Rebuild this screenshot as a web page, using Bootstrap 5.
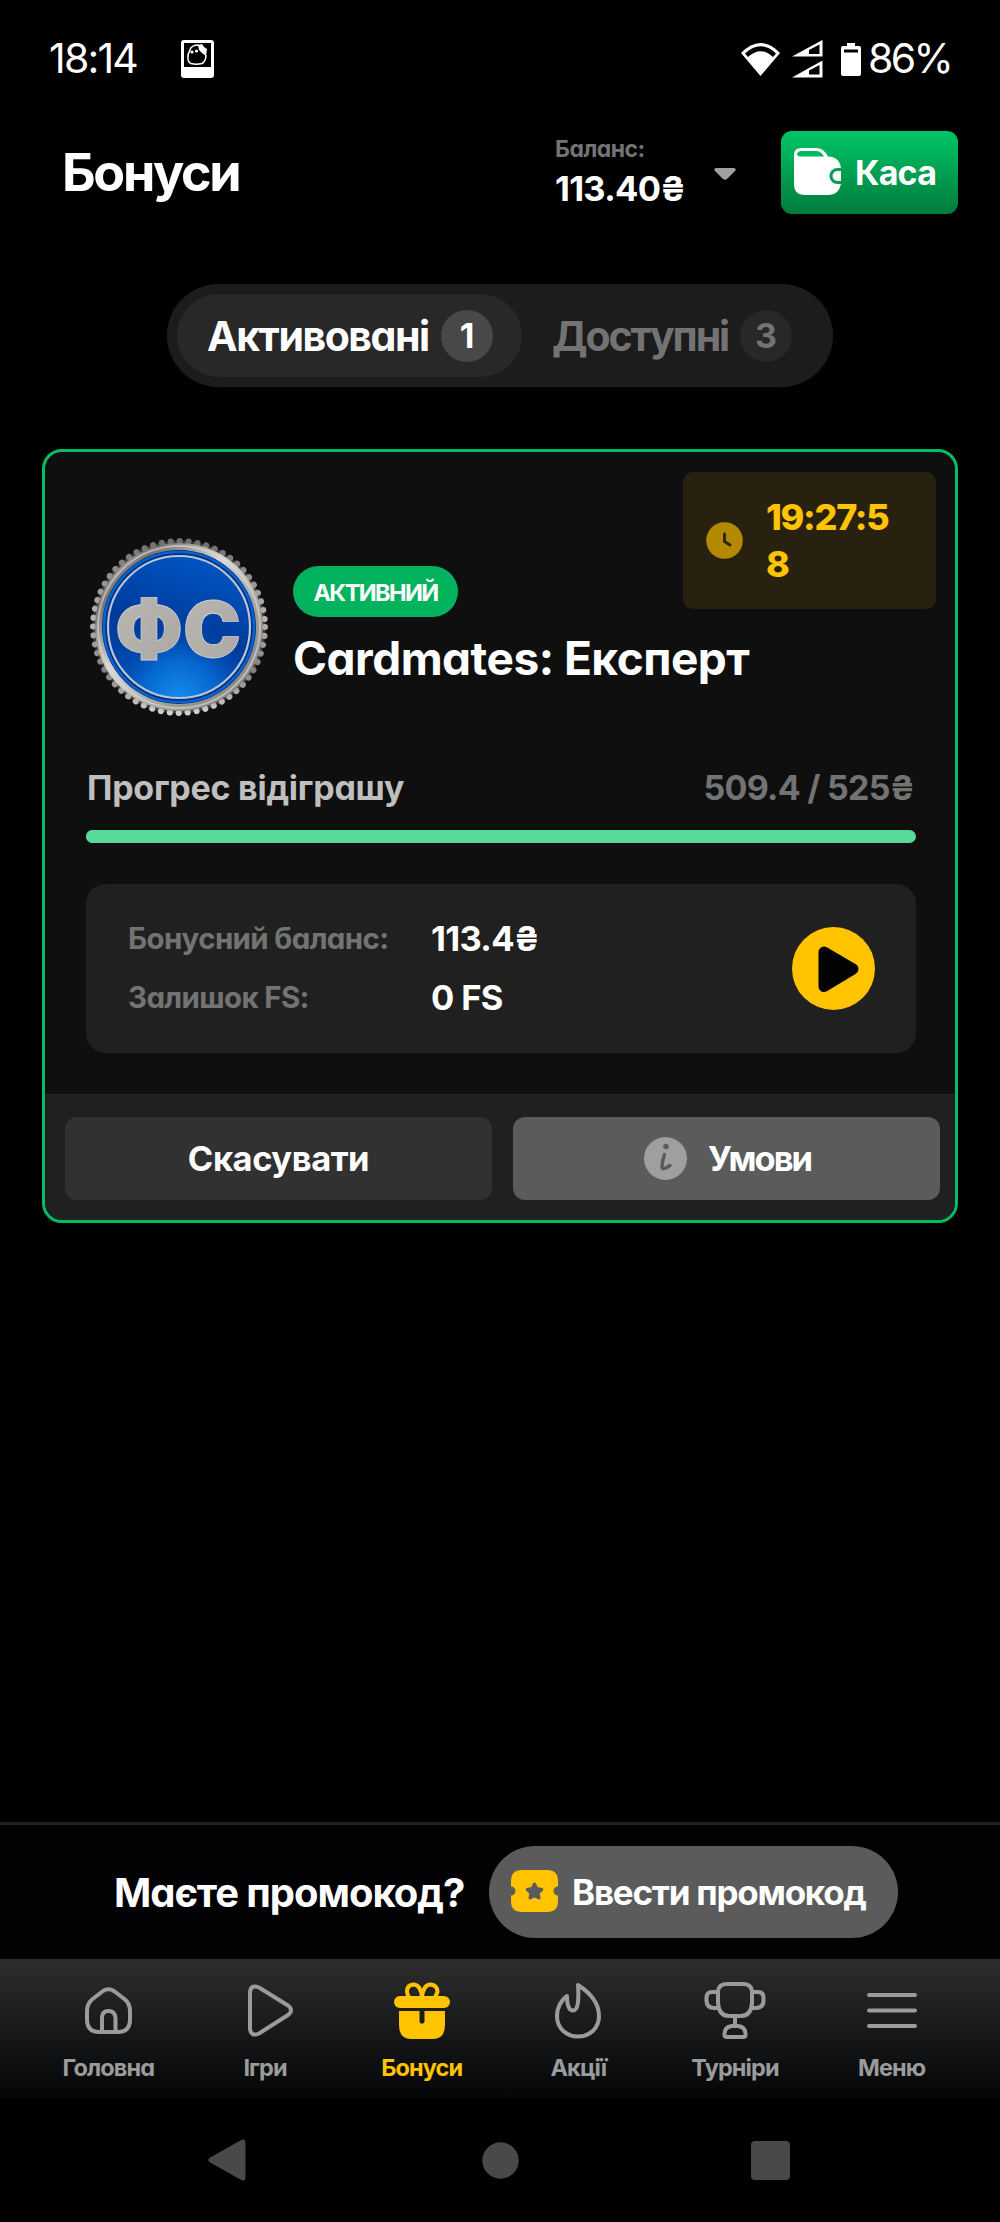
<!DOCTYPE html>
<html lang="uk">
<head>
<meta charset="utf-8">
<meta name="viewport" content="width=device-width, initial-scale=1">
<title>Бонуси</title>
<link href="https://cdn.jsdelivr.net/npm/bootstrap@5.3.0/dist/css/bootstrap.min.css" rel="stylesheet">
<style>
body{background:#000;color:#fff;font-family:Inter,"Noto Sans",sans-serif;font-feature-settings:"cv11";font-weight:680}
.screen{width:1000px;height:2222px;overflow:hidden}
.t{white-space:nowrap;display:inline-block}
svg{display:block;flex:none}
.statusbar{height:118px;padding:0 49px;font-size:41px;font-weight:400}
.status-time{letter-spacing:-1.8px}
.status-charge{letter-spacing:-2.7px}
.sim{margin-left:44px}
.signal{margin-left:12px}
.battery{margin:0 7px 0 18px}
.topbar{height:109px;padding:0 42px 0 62px}
.page-title{font-size:52px;font-weight:700;line-height:60px;letter-spacing:-2.3px}
.balance{width:159px}
.bal-label{font-size:23px;line-height:32px;color:#737373;letter-spacing:-.5px}
.bal-value{font-size:34.5px;line-height:47px;letter-spacing:-.7px}
.caret{margin:3px 45px 0 0}
.btn-cash{width:177px;height:83px;border-radius:11px;background:linear-gradient(#00c565,#007b3c);font-size:34px;color:#fff;font-weight:680;letter-spacing:-.8px}
.btn-cash svg{margin:-2px 14px 0 13px}
.tabs-wrap{width:666px;height:103px;background:#1c1c1c;padding:10px;margin:57px auto 0;font-size:41px}
.tab-on{width:345px;background:#282828;padding-left:30px}
.tab-off{color:#737373;padding-left:30px}
.tab-on .t{letter-spacing:-1.45px;width:222px;margin-top:2px}
.tab-off .t{letter-spacing:-2.1px;width:176px;margin-top:2px}
.count{width:52px;height:52px;font-size:34px;background:#484848;margin-left:12px}
.tab-off .count{background:#282828}
.bonus{width:916px;height:774px;margin:62px auto 0;border:3px solid #00be61;border-radius:20px;background:#0f0f0f}
.bonus-head{margin:86px 0 0 45px;height:178px}
.bonus-info{padding:28px 0 0 25px}
.state{width:165px;height:51px;background:#03b25c;font-size:23.5px;font-weight:700;letter-spacing:-1.6px;padding-top:2px}
.bonus-title{font-size:46px;line-height:55px;margin-top:14px;letter-spacing:-.5px}
.timer{top:20px;right:19px;width:253px;height:137px;border-radius:10px;background:#282110;color:#ffc300;font-size:36px;font-weight:800;line-height:47px;padding-left:23px;letter-spacing:-1.3px}
.timer-text{margin-left:23px}
.prog-row{margin:46px 41px 0 42px;height:50px;font-size:34px;color:#bfbfbf;letter-spacing:-.25px}
.prog-row .sum{color:#737373;letter-spacing:-.75px}
.progress{margin:18px 39px 0 41px;height:13px;border-radius:7px;background:#57d99a}
.progress-bar{background:#57d99a}
.details{margin:41px 39px 0 41px;height:169px;border-radius:20px;background:#202020;padding:0 41px 0 42px}
.detail-row{height:59px}
.detail-label{width:303px;font-size:29.5px;color:#737373;letter-spacing:-.65px;margin-top:-1px}
.detail-value{font-size:34.5px;letter-spacing:-.65px}
.bonus-foot{margin-top:41px;height:126px;background:#202020;border-radius:0 0 17px 17px;padding:3px 15px 0 20px}
.act{height:83px;width:427px;border-radius:12px;background:#313131;color:#fff;font-size:34.5px;font-weight:680;letter-spacing:-.45px}
.act.info{background:#5b5b5b;letter-spacing:-2px}
.act.info svg{margin:0 21px 0 2px}
.promo{height:137px;border-top:3px solid #202122;background:#020204;padding-left:114px;font-size:40px}
.promo-q{width:375px;letter-spacing:-1.05px;padding-top:2px}
.promo-btn{width:409px;height:92px;background:#5b5b5b;font-size:35px;font-weight:680;color:#fff;padding-left:22px;letter-spacing:-1.25px}
.promo-btn svg{margin:-3px 14px 0 0}
.tabbar{height:139px;background:linear-gradient(#2d2d2d,#111213 68%,#040507);padding:0 30px;font-size:23.5px;color:#9b9b9b;letter-spacing:-.9px}
.tabbar .item{flex:1 1 0;padding-top:18px}
.tabbar .item.on{color:#ffc300}
.tabbar .name{line-height:32px;margin-top:9px}
.tabbar svg{fill:none;stroke:currentColor;stroke-width:4;stroke-linejoin:round;stroke-linecap:round}
.sysbar{height:124px;padding:0 210px 0 208px}
.sys-home{margin-left:3px}
</style>
</head>
<body>
<div class="screen d-flex flex-column">
  <div class="statusbar d-flex align-items-center">
    <span class="t status-time">18:14</span>
    <svg class="sim" width="33" height="38" viewBox="0 0 33 38"><rect width="33" height="38" rx="3" fill="#fff"/><rect x="3" y="3" width="27" height="24" fill="#000"/><path d="M9 10C6 15 6 22 10 23.500Q15 25 21 23.500Q25 21 25 15M9 10Q10 5 18 5" fill="none" stroke="#fff" stroke-width="1.500"/><path d="M17 5l4-1 2 3 3 2-1 7-4-3-3-3z" fill="#fff"/><circle cx="11" cy="12" r="1.600" fill="#fff"/><circle cx="15.500" cy="11" r="1.600" fill="#fff"/></svg>
    <svg class="ms-auto" width="39" height="33" viewBox="0 0 39 33"><path d="M0 10Q19.500-10 39 10L19.500 33z" fill="#fff"/><path d="M4 10.500Q19.500-4 35 10.500L32 14Q19.500 2.500 7 14z" fill="#000"/></svg>
    <svg class="signal" width="31" height="38" viewBox="0 0 31 38"><path d="M0 16.500L30.500 0v16.500zM0 37.500L30.500 20.500v17z" fill="#fff"/><path d="M17 10L27.500 4.500V14H17zM17 30.500L27.500 25v9.500H17z" fill="#000"/></svg>
    <svg class="battery" width="20" height="33" viewBox="0 0 20 33"><path d="M6 0h8v3h4q2 0 2 2v26q0 2-2 2H2q-2 0-2-2V5q0-2 2-2h4z" fill="#fff"/><path d="M3 6.500h14v3H3z" fill="#000"/></svg>
    <span class="t status-charge">86%</span>
  </div>
  <header class="topbar d-flex align-items-center">
    <span class="page-title t">Бонуси</span>
    <div class="ms-auto d-flex align-items-center">
      <div class="balance d-flex flex-column align-items-start"><span class="bal-label t">Баланс:</span><span class="bal-value t">113.40₴</span></div>
      <svg class="caret" width="22" height="12" viewBox="0 0 22 12"><path d="M2 0h18q3 1 1 3l-8 8q-2 1.500-4 0L1 3Q-1 1 2 0z" fill="#a0a0a0"/></svg>
      <button class="btn-cash border-0 p-0 d-flex align-items-center">
        <svg width="47" height="47" viewBox="0 0 47 47"><path d="M0 7Q0 0 7 0H22Q30 0 34 8.500Q47 9 47 22.500V36Q44.500 47 35 47H11Q0 47 0 36z" fill="#fff"/><path d="M7 3H22Q27 3 30 8.500H6Q3 8 3 5.500Q4 3 7 3z" fill="#00b85d"/><path d="M47 20H43.500a8 8 0 0 0 0 16H47z" fill="#009f4f"/><path d="M47 23h-3.500a5 5 0 0 0 0 10H47z" fill="#fff"/></svg>
        <span class="t">Каса</span></button>
    </div>
  </header>
  <div class="tabs-wrap rounded-pill d-flex flex-shrink-0">
    <div class="tab-on rounded-pill d-flex align-items-center"><span class="t">Активовані</span><span class="count rounded-circle d-flex align-items-center justify-content-center">1</span></div>
    <div class="tab-off d-flex align-items-center"><span class="t">Доступні</span><span class="count rounded-circle d-flex align-items-center justify-content-center">3</span></div>
  </div>
  <section class="bonus position-relative flex-shrink-0 d-flex flex-column">
    <div class="timer position-absolute d-flex align-items-center">
      <svg width="37" height="37" viewBox="0 0 37 37"><circle cx="18.500" cy="18.500" r="18.300" fill="#b38900"/><path d="M18.500 12v7.500l5.500 3.500" fill="none" stroke="#282110" stroke-width="2.800" stroke-linecap="round" stroke-linejoin="round"/></svg>
      <div class="timer-text">19:27:5<br>8</div>
    </div>
    <div class="bonus-head d-flex">
      <svg width="178" height="178" viewBox="-89 -89 178 178">
        <defs>
          <linearGradient id="rim" x1="0" y1="0" x2="1" y2="1"><stop offset="0" stop-color="#d6d4d0"/><stop offset=".2" stop-color="#77736f"/><stop offset=".42" stop-color="#dad8d5"/><stop offset=".7" stop-color="#a19d99"/><stop offset=".85" stop-color="#8a8784"/><stop offset="1" stop-color="#bbb"/></linearGradient>
          <linearGradient id="bead" x1="0" y1="0" x2="0" y2="1"><stop offset="0" stop-color="#716e6b"/><stop offset=".45" stop-color="#b9b6b3"/><stop offset=".75" stop-color="#817e7b"/><stop offset="1" stop-color="#d2d0cd"/></linearGradient>
          <radialGradient id="glow" cx=".5" cy="1" r=".6"><stop offset="0" stop-color="#158cec"/><stop offset=".45" stop-color="#0566cf"/><stop offset="1" stop-color="#003c9e" stop-opacity="0"/></radialGradient>
          <linearGradient id="blue" x1=".7" y1="0" x2=".4" y2="1"><stop offset="0" stop-color="#0056c4"/><stop offset=".55" stop-color="#003a9b"/><stop offset="1" stop-color="#0048ae"/></linearGradient>
          <linearGradient id="metal" x1="0" y1="0" x2="1" y2="1"><stop offset="0" stop-color="#bbb8b4"/><stop offset="1" stop-color="#aaa7a3"/></linearGradient>
        </defs>
        <circle r="86.500" fill="#3f3d3b"/>
        <circle r="86" fill="none" stroke="url(#bead)" stroke-width="6" stroke-dasharray="0.100 8.905" stroke-linecap="round"/>
        <circle r="84" fill="url(#rim)"/>
        <circle r="81" fill="none" stroke="#dedcd9" stroke-width="2" opacity=".6"/>
        <circle r="77" fill="#02307f"/><circle r="75" fill="none" stroke="#0763d0" stroke-width="2.500"/>
        <circle r="71" fill="url(#blue)"/>
        <circle r="71" fill="url(#glow)" stroke="#b9c4d4" stroke-width="2.200"/>
        <g font-family="Inter,sans-serif" font-weight="900" fill="url(#metal)" stroke="#d2cfcb" stroke-width=".8"><text x="-64" y="29.500" font-size="77" textLength="68" lengthAdjust="spacingAndGlyphs">Ф</text><text x="4" y="29.500" font-size="77" textLength="58" lengthAdjust="spacingAndGlyphs">С</text></g>
      </svg>
      <div class="bonus-info">
        <div class="state rounded-pill d-flex align-items-center justify-content-center">АКТИВНИЙ</div>
        <div class="bonus-title"><span class="t">Cardmates: Експерт</span></div>
      </div>
    </div>
    <div class="prog-row d-flex align-items-center justify-content-between"><span class="t">Прогрес відіграшу</span><span class="t sum">509.4 / 525₴</span></div>
    <div class="progress"><div class="progress-bar" style="width:97%"></div></div>
    <div class="details d-flex align-items-center justify-content-between">
      <div>
        <div class="detail-row d-flex align-items-center"><div class="detail-label">Бонусний баланс:</div><span class="detail-value t">113.4₴</span></div>
        <div class="detail-row d-flex align-items-center"><div class="detail-label">Залишок FS:</div><span class="detail-value t">0 FS</span></div>
      </div>
      <svg width="83" height="83" viewBox="0 0 83 83"><circle cx="41.500" cy="41.500" r="41.500" fill="#ffc300"/><path d="M32 25v34.500L61 42z" fill="#030305" stroke="#030305" stroke-width="11" stroke-linejoin="round"/></svg>
    </div>
    <div class="bonus-foot d-flex align-items-center justify-content-between">
      <button class="act border-0 p-0">Скасувати</button>
      <button class="act info border-0 p-0 d-flex align-items-center justify-content-center"><svg width="43" height="43" viewBox="0 0 43 43"><circle cx="21.500" cy="21.500" r="21.500" fill="#9f9f9f"/><circle cx="22" cy="9.500" r="2.800" fill="#5b5b5b"/><path d="M20.500 17.500Q18 25 18 30q0 4 8-1.500" fill="none" stroke="#5b5b5b" stroke-width="3.400" stroke-linecap="round" stroke-linejoin="round"/></svg><span class="t">Умови</span></button>
    </div>
  </section>
  <div class="promo mt-auto d-flex align-items-center">
    <div class="promo-q">Маєте промокод?</div>
    <button class="promo-btn rounded-pill border-0 d-flex align-items-center"><svg width="47" height="42" viewBox="0 0 47 42"><path d="M11 0H36Q47 0 47 11V16.500a4.500 4.500 0 0 0 0 9V31Q47 42 36 42H11Q0 42 0 31V25.500a4.500 4.500 0 0 0 0-9V11Q0 0 11 0z" fill="#ffc300"/><path d="M23.500 14l2.300 4.600 5 .8-3.600 3.500.8 5-4.500-2.300-4.500 2.300.8-5-3.600-3.500 5-.8z" fill="#5b5b5b" stroke="#5b5b5b" stroke-width="3" stroke-linejoin="round"/></svg><span class="t">Ввести промокод</span></button>
  </div>
  <nav class="tabbar d-flex flex-shrink-0 text-center">
    <div class="item d-flex flex-column align-items-center"><svg width="64" height="66" viewBox="0 0 64 66"><path d="M27 14Q32.500 10.500 38 14L49 22.500Q54 27 54 34V42Q54 55 42 55H23Q11 55 11 42V34Q11 27 16 22.500zM26 55V41Q26 34 32.500 34T39.500 41V55"/></svg><span class="name t">Головна</span></div>
    <div class="item d-flex flex-column align-items-center"><svg width="64" height="66" viewBox="0 0 64 66"><path d="M17 15Q18 7 26 10.500L55 28.500Q61 33 55 38L26 56.500Q18 60 17 52z"/></svg><span class="name t">Ігри</span></div>
    <div class="item on d-flex flex-column align-items-center"><svg width="64" height="66" viewBox="0 0 64 66"><path d="M32 20C31 12 29 7.500 23.500 7.500Q17 8 17 14.500Q17 17 19 20M32 20C33 12 35 7.500 40.500 7.500Q47 8 47.500 14.500Q47 17 45 20"/><rect x="4" y="19" width="56" height="12" rx="6" fill="#ffc300" stroke="none"/><path d="M9 34H29.500V45q2.500 3.500 5 0V34H55V48Q55 62 43 62H21Q9 62 9 48z" fill="#ffc300" stroke="none"/></svg><span class="name t">Бонуси</span></div>
    <div class="item d-flex flex-column align-items-center"><svg width="64" height="66" viewBox="0 0 64 66"><path d="M32 8C46 17 53 27 53 39C53 51 44 59.500 32 59.500S11 51 11 39C11 31 15 23 21 19C21 27 22 33.500 27 33.500S33 24 32 8z"/></svg><span class="name t">Акції</span></div>
    <div class="item d-flex flex-column align-items-center"><svg width="64" height="66" viewBox="0 0 64 66"><path d="M15 14Q16 7 24 7H40Q48 7 49 14V26Q48 39 38 39H26Q16 39 15 26zM15 15H9Q3.500 15 3.500 21V24Q4 31 11 31H16M49 15H55Q60.500 15 60.500 21V24Q60 31 53 31H48M32 39V48M29 49H35Q43 50 42.500 58Q42.500 60 40 60H24Q21.500 60 21.500 58Q21 50 29 49z"/></svg><span class="name t">Турніри</span></div>
    <div class="item d-flex flex-column align-items-center"><svg width="64" height="66" viewBox="0 0 64 66"><path d="M9 18H55M9 33.500H55M9 49H55"/></svg><span class="name t">Меню</span></div>
  </nav>
  <div class="sysbar d-flex align-items-center justify-content-between flex-shrink-0">
    <svg width="38" height="42" viewBox="0 0 38 42"><path d="M35 3V39L3 21z" fill="#494949" stroke="#494949" stroke-width="5" stroke-linejoin="round"/></svg>
    <svg class="sys-home" width="37" height="37" viewBox="0 0 37 37"><circle cx="18.500" cy="18.500" r="18.200" fill="#494949"/></svg>
    <svg width="39" height="39" viewBox="0 0 39 39"><rect width="39" height="39" rx="4" fill="#494949"/></svg>
  </div>
</div>
<script src="https://cdn.jsdelivr.net/npm/bootstrap@5.3.0/dist/js/bootstrap.bundle.min.js"></script>
</body>
</html>
